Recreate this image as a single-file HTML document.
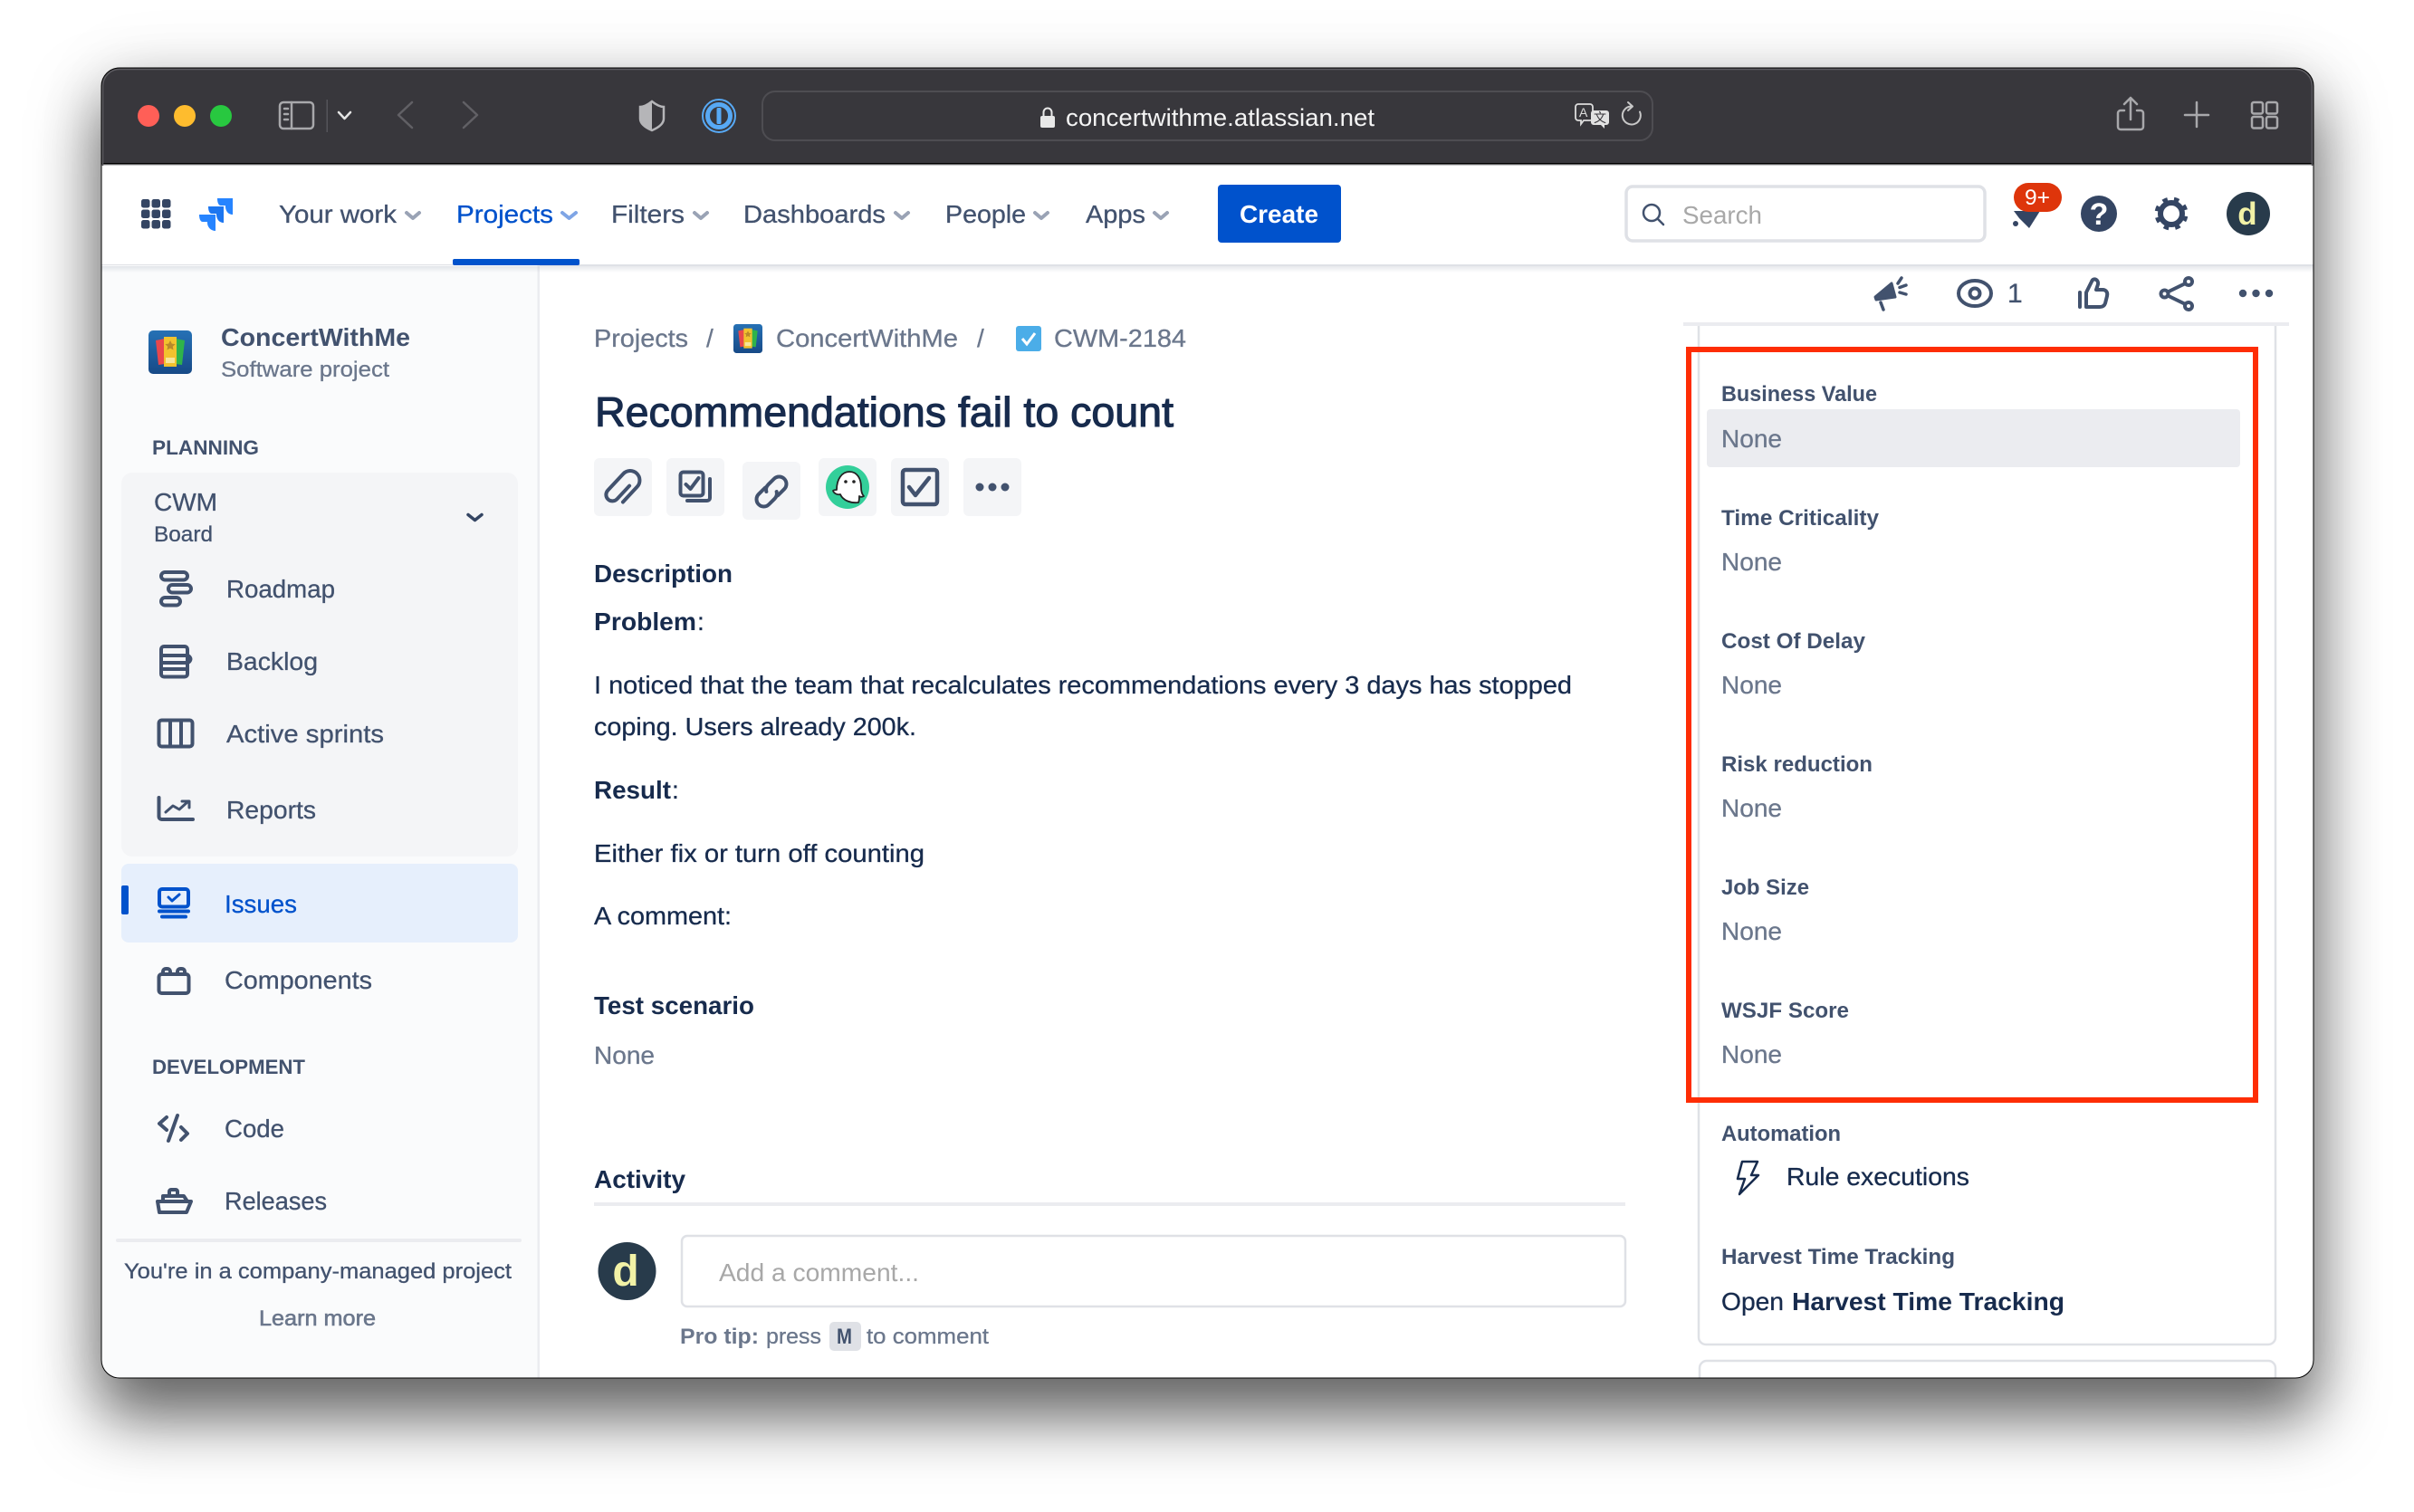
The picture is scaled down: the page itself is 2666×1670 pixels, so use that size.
<!DOCTYPE html>
<html lang="en">
<head>
<meta charset="utf-8">
<title>Recommendations fail to count</title>
<style>
html,body{margin:0;padding:0;background:#fff;width:2666px;height:1670px;overflow:hidden}
#shadow{position:absolute;left:112px;top:75px;width:2443px;height:1447px;border-radius:20px;box-shadow:0 40px 70px 4px rgba(0,0,0,.6),0 0 80px 0 rgba(0,0,0,.08)}
svg{position:absolute;left:0;top:0}
text{font-family:"Liberation Sans","Noto Sans CJK SC",sans-serif;font-size:28px;transform:translateX(-1px)}
.n{fill:#42526e;stroke:#42526e;stroke-width:.3px}
.d{fill:#172b4d;stroke:#172b4d;stroke-width:.3px}
.g{fill:#6b778c;stroke:#6b778c;stroke-width:.3px}
.b{font-weight:700;stroke:none}
.s{font-size:24px}
.l{font-size:24px;font-weight:700;fill:#42526e}
.i{fill:none;stroke:#42526e;stroke-width:4;stroke-linecap:round;stroke-linejoin:round}
.c{fill:none;stroke:#9aa3b5;stroke-width:4;stroke-linecap:round;stroke-linejoin:round}
.t{fill:none;stroke:#a8a8ab;stroke-width:2.5;stroke-linecap:round;stroke-linejoin:round}
</style>
</head>
<body>
<div id="shadow"></div>
<svg width="2666" height="1670" viewBox="0 0 2666 1670" xmlns="http://www.w3.org/2000/svg">
<defs>
<clipPath id="win"><rect x="112" y="75" width="2443" height="1447" rx="20"/></clipPath>
<linearGradient id="pg" x1="0" y1="0" x2="0" y2="1"><stop offset="0" stop-color="#2671b5"/><stop offset="1" stop-color="#174a87"/></linearGradient>
<linearGradient id="ns" x1="0" y1="0" x2="0" y2="1"><stop offset="0" stop-color="#091e42" stop-opacity=".1"/><stop offset="1" stop-color="#091e42" stop-opacity="0"/></linearGradient>
<g id="proj">
<rect width="48" height="48" rx="5" fill="url(#pg)"/>
<path d="M8 11L18 9V37L11 38Z" fill="#e8474c"/>
<path d="M40 11L30 9V37L37 38Z" fill="#2fb34a"/>
<rect x="17" y="7" width="14" height="33" fill="#f2c22e"/>
<path d="M24 11l1.800 3.600 3.800.500-2.800 2.600.700 3.800-3.500-1.900-3.500 1.900.700-3.800-2.800-2.600 3.800-.500z" fill="#b98a2a"/>
<rect x="19" y="30" width="10" height="6" fill="#f7e59a"/>
</g>
</defs>
<g clip-path="url(#win)">
<rect x="112" y="75" width="2443" height="1447" fill="#fff"/>
<!-- title bar -->
<rect x="112" y="75" width="2443" height="105" fill="#38373c"/>
<rect x="112" y="180" width="2443" height="1.500" fill="#000"/>
<rect x="112" y="181.500" width="2443" height="1.500" fill="#c9c9cb"/>
<circle cx="164" cy="128" r="12" fill="#ff5f57"/>
<circle cx="204" cy="128" r="12" fill="#febc2e"/>
<circle cx="244" cy="128" r="12" fill="#28c840"/>
<rect x="309" y="113" width="37" height="29" rx="4" class="t"/>
<path d="M322 113V142" class="t"/>
<path d="M314 120h4M314 126h4M314 132h4" class="t" stroke-width="2"/>
<rect x="360.500" y="110" width="1.500" height="36" fill="#55545a"/>
<path d="M374 124l6.500 7 6.500-7" fill="none" stroke="#e4e4e4" stroke-width="2.500" stroke-linecap="round" stroke-linejoin="round"/>
<path d="M455 113L440 127L455 141M512 113L527 127L512 141" fill="none" stroke="#616065" stroke-width="2.500" stroke-linecap="round" stroke-linejoin="round"/>
<path d="M720 112C715 116 711 118 707 118V131C707 137 713 141 720 144C727 141 733 137 733 131V118C729 118 725 116 720 112Z" fill="none" stroke="#b5b5b8" stroke-width="2.500"/>
<path d="M720 112C715 116 711 118 707 118V131C707 137 713 141 720 144Z" fill="#b5b5b8"/>
<circle cx="794" cy="128" r="18" fill="none" stroke="#57a9f5" stroke-width="2"/>
<circle cx="794" cy="128" r="12.500" fill="none" stroke="#57a9f5" stroke-width="5"/>
<rect x="791.500" y="119" width="5" height="18" rx="1.500" fill="#57a9f5"/>
<rect x="842" y="101" width="983" height="54" rx="14" fill="none" stroke="#4e4d52" stroke-width="2"/>
<rect x="1149" y="128" width="16" height="13" rx="2" fill="#e8e8e8"/>
<path d="M1152.500 128v-4a4.500 4.500 0 0 1 9 0v4" fill="none" stroke="#e8e8e8" stroke-width="2"/>
<text x="1178" y="139" fill="#f4f4f4" textLength="341" lengthAdjust="spacingAndGlyphs" style="font-size:27px">concertwithme.atlassian.net</text>
<path d="M1743 115h13a3 3 0 0 1 3 3v12a3 3 0 0 1-3 3h-7l-3 4v-4h-3a3 3 0 0 1-3-3v-12a3 3 0 0 1 3-3z" fill="none" stroke="#dcdcdc" stroke-width="1.800"/>
<text x="1745" y="129" fill="#dcdcdc" style="font-size:14px">A</text>
<path d="M1760 122h14a3 3 0 0 1 3 3v10a3 3 0 0 1-3 3h-2v4l-4-4h-8a3 3 0 0 1-3-3v-10a3 3 0 0 1 3-3z" fill="#e2e2e2"/>
<text x="1761" y="135" fill="#38373c" style="font-size:14px">文</text>
<path d="M1801 117.500a10 10 0 1 0 10 6" fill="none" stroke="#c8c8c8" stroke-width="2" stroke-linecap="round"/>
<path d="M1798 113l5 4.500-5 4.500" fill="none" stroke="#c8c8c8" stroke-width="2" stroke-linecap="round" stroke-linejoin="round"/>
<path d="M2346 122h-4a3 3 0 0 0-3 3v15a3 3 0 0 0 3 3h22a3 3 0 0 0 3-3v-15a3 3 0 0 0-3-3h-4M2353 132V108M2346 115l7-7 7 7" class="t"/>
<path d="M2426 113V140M2413 127H2439" class="t"/>
<rect x="2487" y="113" width="12" height="12.500" rx="2" class="t"/><rect x="2503" y="113" width="12" height="12.500" rx="2" class="t"/>
<rect x="2487" y="129" width="12" height="12.500" rx="2" class="t"/><rect x="2503" y="129" width="12" height="12.500" rx="2" class="t"/>
<!-- nav -->
<rect x="112" y="292" width="2443" height="2" fill="#dfe1e6"/>
<g fill="#344563">
<rect x="156" y="220" width="9.500" height="9.500" rx="2.500"/><rect x="167.500" y="220" width="9.500" height="9.500" rx="2.500"/><rect x="179" y="220" width="9.500" height="9.500" rx="2.500"/>
<rect x="156" y="231.500" width="9.500" height="9.500" rx="2.500"/><rect x="167.500" y="231.500" width="9.500" height="9.500" rx="2.500"/><rect x="179" y="231.500" width="9.500" height="9.500" rx="2.500"/>
<rect x="156" y="243" width="9.500" height="9.500" rx="2.500"/><rect x="167.500" y="243" width="9.500" height="9.500" rx="2.500"/><rect x="179" y="243" width="9.500" height="9.500" rx="2.500"/>
</g>
<path d="M240 219H257V237C252 237 249 233 249 228V227H244C241 227 240 223 240 219Z" fill="#2684ff"/>
<path d="M230 228H247V246C242 246 239 242 239 237V236H234C231 236 230 232 230 228Z" fill="#1c76f0"/>
<path d="M220 237H238V255C233 255 229 251 229 246V245H224C221 245 220 241 220 237Z" fill="#2684ff"/>
<text x="309" y="246" class="n" textLength="130" lengthAdjust="spacingAndGlyphs">Your work</text>
<path d="M449 235l7 6 7-6" class="c"/>
<text x="505" y="246" fill="#0052cc" stroke="#0052cc" stroke-width=".3" textLength="107" lengthAdjust="spacingAndGlyphs">Projects</text>
<path d="M621 235l7.500 6 7.500-6" class="c" style="stroke:#7fa5e5"/>
<text x="676" y="246" class="n" textLength="81" lengthAdjust="spacingAndGlyphs">Filters</text>
<path d="M767 235l7 6 7-6" class="c"/>
<rect x="500" y="286" width="140" height="7" rx="2" fill="#0052cc"/>
<text x="822" y="246" class="n" textLength="157" lengthAdjust="spacingAndGlyphs">Dashboards</text>
<path d="M989 235l7 6 7-6" class="c"/>
<text x="1045" y="246" class="n" textLength="89" lengthAdjust="spacingAndGlyphs">People</text>
<path d="M1143 235l7 6 7-6" class="c"/>
<text x="1200" y="246" class="n" textLength="66" lengthAdjust="spacingAndGlyphs">Apps</text>
<path d="M1275 235l7 6 7-6" class="c"/>
<rect x="1345" y="204" width="136" height="64" rx="4" fill="#0052cc"/>
<text x="1370" y="246" class="b" fill="#fff" textLength="87" lengthAdjust="spacingAndGlyphs">Create</text>
<rect x="1796" y="206" width="396" height="60" rx="7" fill="#fff" stroke="#dfe1e6" stroke-width="3.500"/>
<circle cx="1824" cy="235" r="9" fill="none" stroke="#42526e" stroke-width="2.500"/>
<path d="M1831 242l6 6" fill="none" stroke="#42526e" stroke-width="2.500" stroke-linecap="round"/>
<text x="1859" y="247" fill="#a8a8a8" textLength="88" lengthAdjust="spacingAndGlyphs">Search</text>
<path d="M2224 233L2253 233L2241 252L2230 241Z" fill="#344563"/>
<circle cx="2226" cy="247" r="3" fill="#344563"/>
<rect x="2224" y="202" width="53" height="32" rx="16" fill="#de350b"/>
<text x="2237" y="226" fill="#fff" textLength="28" lengthAdjust="spacingAndGlyphs" style="font-size:24px">9+</text>
<circle cx="2318" cy="236" r="20" fill="#344563"/>
<text x="2319" y="248" text-anchor="middle" class="b" fill="#fff" style="font-size:34px">?</text>
<circle cx="2398" cy="236" r="12" fill="none" stroke="#344563" stroke-width="6"/>
<circle cx="2398" cy="236" r="16" fill="none" stroke="#344563" stroke-width="5" stroke-dasharray="5.500 7.066" transform="rotate(10 2398 236)"/>
<circle cx="2483" cy="236" r="24" fill="#283b4b"/>
<text x="2483" y="248" text-anchor="middle" class="b" fill="#f2f2a6" style="font-size:35px">d</text>
<!-- sidebar -->
<rect x="112" y="293" width="482" height="1230" fill="#fafbfc"/>
<rect x="593.500" y="293" width="2.500" height="1230" fill="#ebecf0"/>
<rect x="112" y="294" width="2443" height="7" fill="url(#ns)"/>
<use href="#proj" x="164" y="365"/>
<text x="245" y="382" class="n b" textLength="209" lengthAdjust="spacingAndGlyphs">ConcertWithMe</text>
<text x="245" y="416" class="g s" textLength="186" lengthAdjust="spacingAndGlyphs">Software project</text>
<text x="169" y="502" class="n b" textLength="118" lengthAdjust="spacingAndGlyphs" style="font-size:22px">PLANNING</text>
<rect x="134" y="522" width="438" height="424" rx="12" fill="#f4f5f7"/>
<text x="171" y="564" class="n" textLength="70" lengthAdjust="spacingAndGlyphs">CWM</text>
<text x="171" y="598" class="n s" textLength="65" lengthAdjust="spacingAndGlyphs">Board</text>
<path d="M517 568.500l7.500 6 7.500-6" fill="none" stroke="#344563" stroke-width="3.500" stroke-linecap="round" stroke-linejoin="round"/>
<rect x="178" y="632" width="29" height="8.500" rx="4.250" class="i"/>
<rect x="186" y="646" width="25" height="8.500" rx="4.250" class="i"/>
<rect x="178" y="660" width="21" height="8.500" rx="4.250" class="i"/>
<text x="251" y="660" class="n" textLength="120" lengthAdjust="spacingAndGlyphs">Roadmap</text>
<rect x="178" y="714" width="29" height="33.500" rx="3" class="i"/>
<path d="M178 724H207a4.500 4.500 0 0 1 3.500 4 4.500 4.500 0 0 1-3.500 4H178M178 739H207" class="i"/>
<text x="251" y="740" class="n" textLength="101" lengthAdjust="spacingAndGlyphs">Backlog</text>
<rect x="175.500" y="795.500" width="37" height="29" rx="3" class="i"/>
<path d="M188 795.500V824.500M200 795.500V824.500" class="i"/>
<text x="251" y="820" class="n" textLength="174" lengthAdjust="spacingAndGlyphs">Active sprints</text>
<path d="M175.500 881V902a3 3 0 0 0 3 3H213" class="i"/>
<path d="M183 897l8-7 7 4 10-9M201 885h8v7" class="i" style="stroke-width:3"/>
<text x="251" y="904" class="n" textLength="99" lengthAdjust="spacingAndGlyphs">Reports</text>
<rect x="134" y="954" width="438" height="87" rx="8" fill="#e6effc"/>
<rect x="134" y="978" width="8" height="32" rx="2" fill="#0052cc"/>
<g fill="none" stroke="#0052cc" stroke-width="4" stroke-linecap="round" stroke-linejoin="round">
<rect x="176" y="982" width="32" height="19.500" rx="3"/>
<path d="M186 991l4 4 8-7" stroke-width="3"/>
<path d="M176 1006.500H208M179 1012.500H205"/>
</g>
<text x="249" y="1008" fill="#0052cc" stroke="#0052cc" stroke-width=".3" textLength="80" lengthAdjust="spacingAndGlyphs">Issues</text>
<rect x="175.500" y="1076" width="33" height="21" rx="3" class="i"/>
<path d="M180 1076v-3a3 3 0 0 1 3-3h2a3 3 0 0 1 3 3v3M196 1076v-3a3 3 0 0 1 3-3h2a3 3 0 0 1 3 3v3" class="i"/>
<text x="249" y="1092" class="n" textLength="163" lengthAdjust="spacingAndGlyphs">Components</text>
<text x="169" y="1186" class="n b" textLength="169" lengthAdjust="spacingAndGlyphs" style="font-size:22px">DEVELOPMENT</text>
<path d="M184 1234l-8 7 8 7M186 1260l10-28M200 1245l7 7-7 7" class="i"/>
<text x="249" y="1256" class="n" textLength="66" lengthAdjust="spacingAndGlyphs">Code</text>
<path d="M174 1327H211L206 1339H176ZM180 1327V1321H203L207 1327M187 1321V1316a2 2 0 0 1 2-2h5a2 2 0 0 1 2 2v5" class="i"/>
<text x="249" y="1336" class="n" textLength="113" lengthAdjust="spacingAndGlyphs">Releases</text>
<rect x="128" y="1368" width="448" height="4" rx="2" fill="#ebecf0"/>
<text x="138" y="1412" class="n s" textLength="428" lengthAdjust="spacingAndGlyphs">You're in a company-managed project</text>
<text x="287" y="1464" class="g s" textLength="129" lengthAdjust="spacingAndGlyphs" style="stroke-width:.6px">Learn more</text>
<!-- main -->
<text x="657" y="383" class="g" textLength="104" lengthAdjust="spacingAndGlyphs">Projects</text>
<text x="781" y="383" class="g">/</text>
<use href="#proj" transform="translate(810 358) scale(.667)"/>
<text x="858" y="383" class="g" textLength="201" lengthAdjust="spacingAndGlyphs">ConcertWithMe</text>
<text x="1080" y="383" class="g">/</text>
<rect x="1122" y="360" width="28" height="28" rx="3" fill="#4bade8"/>
<path d="M1129 374l5 6 9-12" fill="none" stroke="#fff" stroke-width="3"/>
<text x="1165" y="383" class="g" textLength="146" lengthAdjust="spacingAndGlyphs">CWM-2184</text>
<text x="658" y="471" fill="#172b4d" stroke="#172b4d" stroke-width="1.100" textLength="639" lengthAdjust="spacingAndGlyphs" style="font-size:46px">Recommendations fail to count</text>
<g fill="#f4f5f7">
<rect x="656" y="506" width="64" height="64" rx="6"/>
<rect x="736" y="506" width="64" height="64" rx="6"/>
<rect x="820" y="510" width="64" height="64" rx="6"/>
<rect x="904" y="506" width="64" height="64" rx="6"/>
<rect x="984" y="506" width="64" height="64" rx="6"/>
<rect x="1064" y="506" width="64" height="64" rx="6"/>
</g>
<path d="M5-8V12a7 7 0 0 1-14 0V-13a10.500 10.500 0 0 1 21 0V10" class="i" transform="translate(686 539) rotate(43)"/>
<rect x="751.500" y="521.500" width="25" height="26" rx="3" class="i"/>
<path d="M757.500 535l5 5 9-12" class="i"/>
<path d="M784 529V550a3 3 0 0 1-3 3H759" class="i"/>
<g transform="translate(852 543) rotate(-45)" class="i">
<path d="M-2-8H-12a8 8 0 0 0 0 16H-3a8 8 0 0 0 7-4"/>
<path d="M2 8H12a8 8 0 0 0 0-16H3a8 8 0 0 0-7 4"/>
</g>
<circle cx="936" cy="538" r="24" fill="#33cf9a"/>
<path d="M924 541C924 529 930 521 938 521C947 521 951 529 951 538C951 543 952 546 954 548C952 549 950 549 949 548C949 551 949 553 948 555C940 556 931 553 928 546C925 547 921 545 920 542C921 541 923 541 924 541Z" fill="#fff" stroke="#222" stroke-width="1.800" stroke-linejoin="round"/>
<circle cx="934" cy="532" r="1.800" fill="#222"/><circle cx="943" cy="532" r="1.800" fill="#222"/>
<rect x="997" y="519" width="38" height="38" rx="3" fill="none" stroke="#42526e" stroke-width="4.500"/>
<path d="M1004 538l7 9 15-19" fill="none" stroke="#42526e" stroke-width="4.500" stroke-linecap="round" stroke-linejoin="round"/>
<circle cx="1082" cy="538" r="4.500" fill="#42526e"/><circle cx="1096" cy="538" r="4.500" fill="#42526e"/><circle cx="1110" cy="538" r="4.500" fill="#42526e"/>
<text x="657" y="643" class="d b" textLength="153" lengthAdjust="spacingAndGlyphs">Description</text>
<text x="657" y="696" class="d b" textLength="113" lengthAdjust="spacingAndGlyphs">Problem</text>
<text x="771" y="696" class="d">:</text>
<text x="657" y="766" class="d" textLength="1080" lengthAdjust="spacingAndGlyphs">I noticed that the team that recalculates recommendations every 3 days has stopped</text>
<text x="657" y="812" class="d" textLength="356" lengthAdjust="spacingAndGlyphs">coping. Users already 200k.</text>
<text x="657" y="882" class="d b" textLength="85" lengthAdjust="spacingAndGlyphs">Result</text>
<text x="743" y="882" class="d">:</text>
<text x="657" y="952" class="d" textLength="365" lengthAdjust="spacingAndGlyphs">Either fix or turn off counting</text>
<text x="657" y="1021" class="d" textLength="152" lengthAdjust="spacingAndGlyphs">A comment:</text>
<text x="657" y="1120" class="d b" textLength="177" lengthAdjust="spacingAndGlyphs">Test scenario</text>
<text x="657" y="1175" class="g" textLength="67" lengthAdjust="spacingAndGlyphs">None</text>
<text x="657" y="1312" class="d b" textLength="101" lengthAdjust="spacingAndGlyphs">Activity</text>
<rect x="656" y="1328" width="1139" height="4" fill="#ebecf0"/>
<circle cx="692.500" cy="1404" r="32" fill="#283b4b"/>
<text x="692" y="1420" text-anchor="middle" class="b" fill="#f2f2a6" style="font-size:48px">d</text>
<rect x="753" y="1365" width="1042" height="78" rx="6" fill="#fff" stroke="#dfe1e6" stroke-width="2.500"/>
<text x="795" y="1415" fill="#a8a8a8" textLength="221" lengthAdjust="spacingAndGlyphs">Add a comment...</text>
<text x="752" y="1484" class="g s b" textLength="87" lengthAdjust="spacingAndGlyphs">Pro tip:</text>
<text x="847" y="1484" class="g s" textLength="61" lengthAdjust="spacingAndGlyphs">press</text>
<rect x="916" y="1460" width="35" height="32" rx="5" fill="#dfe1e6"/>
<text x="925" y="1484" class="n s b" textLength="17" lengthAdjust="spacingAndGlyphs">M</text>
<text x="958" y="1484" class="g s" textLength="135" lengthAdjust="spacingAndGlyphs">to comment</text>
<!-- right toolbar -->
<path d="M2071 328L2089 313L2093 328L2072 331Z" fill="#42526e" stroke="#42526e" stroke-width="3" stroke-linejoin="round"/>
<path d="M2077 334l3 8M2100 307l-4 6M2105 315l-7 2.500M2105 325l-7-2" class="i" style="stroke-width:3.500"/>
<ellipse cx="2181" cy="324" rx="18" ry="14" class="i"/>
<circle cx="2181" cy="324" r="5.500" class="i"/>
<text x="2218" y="334" class="n" style="font-size:30px">1</text>
<path d="M2297 323V339" class="i"/>
<path d="M2304 339V323L2310 311C2312 306 2318 309 2317 314L2315 320H2322C2326 320 2328 323 2327 327L2325 335C2324 338 2322 339 2319 339Z" class="i"/>
<circle cx="2417" cy="311" r="4" class="i"/><circle cx="2390.500" cy="324.500" r="4" class="i"/><circle cx="2417" cy="338" r="4" class="i"/>
<path d="M2413.500 313L2394 322.500M2394 326.500L2413.500 336" class="i"/>
<circle cx="2477" cy="324" r="4.200" fill="#42526e"/><circle cx="2491.500" cy="324" r="4.200" fill="#42526e"/><circle cx="2506" cy="324" r="4.200" fill="#42526e"/>
<!-- right panel -->
<path d="M1876 360V1477a8 8 0 0 0 8 8H2505a8 8 0 0 0 8-8V360" fill="none" stroke="#dfe1e6" stroke-width="2.500"/>
<rect x="1859" y="356" width="669" height="4" fill="#ebecf0"/>
<path d="M1877 1530V1511a8 8 0 0 1 8-8H2505a8 8 0 0 1 8 8V1530" fill="none" stroke="#dfe1e6" stroke-width="2.500"/>
<rect x="1885" y="452" width="589" height="64" rx="4" fill="#ebecf0"/>
<text x="1902" y="443" class="l" textLength="172" lengthAdjust="spacingAndGlyphs">Business Value</text>
<text x="1902" y="494" class="g" textLength="67" lengthAdjust="spacingAndGlyphs">None</text>
<text x="1902" y="580" class="l" textLength="174" lengthAdjust="spacingAndGlyphs">Time Criticality</text>
<text x="1902" y="630" class="g" textLength="67" lengthAdjust="spacingAndGlyphs">None</text>
<text x="1902" y="716" class="l" textLength="159" lengthAdjust="spacingAndGlyphs">Cost Of Delay</text>
<text x="1902" y="766" class="g" textLength="67" lengthAdjust="spacingAndGlyphs">None</text>
<text x="1902" y="852" class="l" textLength="167" lengthAdjust="spacingAndGlyphs">Risk reduction</text>
<text x="1902" y="902" class="g" textLength="67" lengthAdjust="spacingAndGlyphs">None</text>
<text x="1902" y="988" class="l" textLength="97" lengthAdjust="spacingAndGlyphs">Job Size</text>
<text x="1902" y="1038" class="g" textLength="67" lengthAdjust="spacingAndGlyphs">None</text>
<text x="1902" y="1124" class="l" textLength="141" lengthAdjust="spacingAndGlyphs">WSJF Score</text>
<text x="1902" y="1174" class="g" textLength="67" lengthAdjust="spacingAndGlyphs">None</text>
<rect x="1865" y="386" width="626" height="829" fill="none" stroke="#fe2d05" stroke-width="6"/>
<text x="1902" y="1260" class="l" textLength="132" lengthAdjust="spacingAndGlyphs">Automation</text>
<path d="M1924 1283H1941L1934 1298H1942L1921 1319L1927 1302H1919Z" fill="none" stroke="#172b4d" stroke-width="2.500" stroke-linejoin="round"/>
<text x="1974" y="1309" class="d" textLength="202" lengthAdjust="spacingAndGlyphs">Rule executions</text>
<text x="1902" y="1396" class="l" textLength="258" lengthAdjust="spacingAndGlyphs">Harvest Time Tracking</text>
<text x="1902" y="1447" class="d" textLength="69" lengthAdjust="spacingAndGlyphs">Open</text>
<text x="1980" y="1447" class="d b" textLength="301" lengthAdjust="spacingAndGlyphs">Harvest Time Tracking</text>
<!-- rims -->
<path d="M113.500 183V95a18.500 18.500 0 0 1 18.500-18.500H2535a18.500 18.500 0 0 1 18.500 18.500V183" fill="none" stroke="#5d5c61" stroke-width="1.500"/>
</g>
<rect x="112" y="75" width="2443" height="1447" rx="20" fill="none" stroke="#000" stroke-width="1"/>
</svg>
</body>
</html>
